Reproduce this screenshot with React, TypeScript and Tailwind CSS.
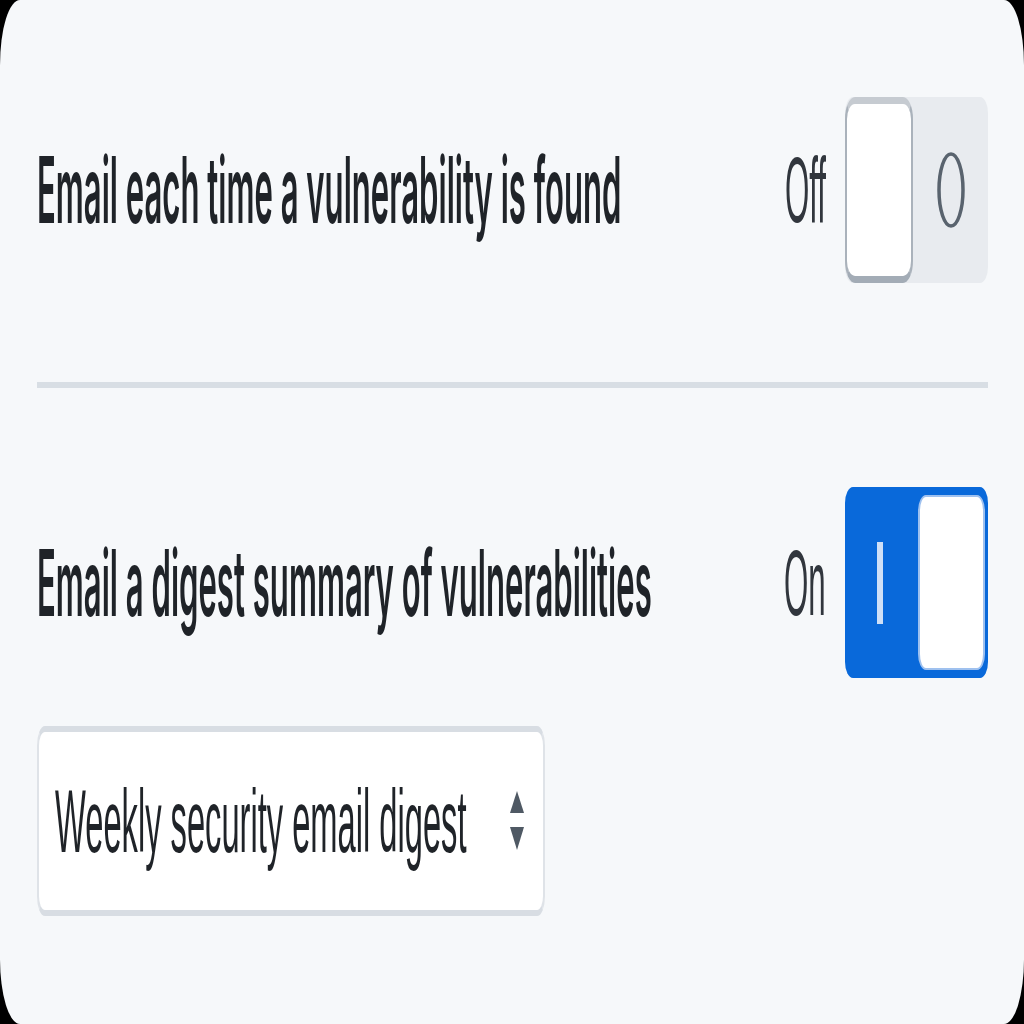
import React from "react";

function Stretch({
  children,
  className,
  innerClass,
}: {
  children: React.ReactNode;
  className: string;
  innerClass: string;
}) {
  return (
    <div className={className}>
      <span className={innerClass}>{children}</span>
    </div>
  );
}

export default function App() {
  return (
    <div className="w-[1024px] h-[1024px] bg-black" style={{ fontFamily: '"Liberation Sans", Arial, sans-serif' }}>
      <div className="w-full h-full bg-[#f6f8fa] rounded-[20px_/_65px] pl-[37px] pr-[36px] pt-[97px] flex flex-col">
        {/* Row 1 */}
        <div className="flex items-center h-[186px]">
          <Stretch
            className="flex-1 min-w-0"
            innerClass="block whitespace-nowrap origin-left scale-x-[0.338] text-[92px] leading-none text-[#1f2328] [font-family:Inter,'Liberation_Sans',sans-serif] font-semibold"
          >
            Email each time a vulnerability is found
          </Stretch>
          <div className="flex items-center h-full">
            <Stretch
              className="w-[50px] flex justify-end"
              innerClass="block whitespace-nowrap origin-right scale-x-[0.34] text-[92px] leading-none text-[#31363d]"
            >
              Off
            </Stretch>
            <div className="ml-[19px] w-[143px] h-full flex bg-[#e8ebef] rounded-[8px_/_16px]">
              <div className="w-[68px] h-full bg-white border-x-2 border-t-[7px] border-b-[7px] border-x-[#aab2bb] border-t-[#c6cbd1] border-b-[#a3acb6] rounded-[10px_/_22px]" />
              <div className="flex-1 flex items-center justify-center">
                <svg width="30" height="80" viewBox="0 0 30 80">
                  <ellipse cx="15" cy="40" rx="12" ry="36" fill="none" stroke="#59636e" strokeWidth="3.5" />
                </svg>
              </div>
            </div>
          </div>
        </div>

        {/* Divider */}
        <div className="mt-[99px] h-[6px] bg-[#d8dee4]" />

        {/* Row 2 */}
        <div className="mt-[99px] flex items-center h-[191px]">
          <Stretch
            className="flex-1 min-w-0"
            innerClass="block whitespace-nowrap origin-left scale-x-[0.338] text-[92px] leading-none text-[#1f2328] [font-family:Inter,'Liberation_Sans',sans-serif] font-semibold"
          >
            Email a digest summary of vulnerabilities
          </Stretch>
          <div className="flex items-center h-full">
            <Stretch
              className="w-[50px] flex justify-end"
              innerClass="block whitespace-nowrap origin-right scale-x-[0.34] text-[92px] leading-none text-[#31363d]"
            >
              On
            </Stretch>
            <div className="ml-[19px] w-[143px] h-full flex items-center bg-[#0969da] rounded-[8px_/_16px] pr-[3px]">
              <div className="flex-1 flex items-center justify-center pr-[4px]">
                <div className="w-[6px] h-[82px] bg-[#cfe0f7]" />
              </div>
              <div className="w-[67px] h-[175px] bg-white rounded-[8px_/_16px] border-2 border-[#9fc1ef]" />
            </div>
          </div>
        </div>

        {/* Select */}
        <div className="mt-[48px] w-[508px] h-[190px] bg-white border-x-2 border-t-[6px] border-b-[6px] border-x-[#dfe3e8] border-t-[#d8dde3] border-b-[#d8dde3] rounded-[8px_/_20px] flex items-center pl-[16px] pr-[16px]">
          <Stretch
            className="flex-1 min-w-0"
            innerClass="block whitespace-nowrap origin-left scale-x-[0.367] text-[89px] leading-none text-[#1f2328]"
          >
            Weekly security email digest
          </Stretch>
          <svg width="18" height="64" viewBox="0 0 18 64" className="mr-[1px]">
            <path d="M9 2 L16 24 L2 24 Z" fill="#4f5964" />
            <path d="M2 38 L16 38 L9 61 Z" fill="#4f5964" />
          </svg>
        </div>
      </div>
    </div>
  );
}
